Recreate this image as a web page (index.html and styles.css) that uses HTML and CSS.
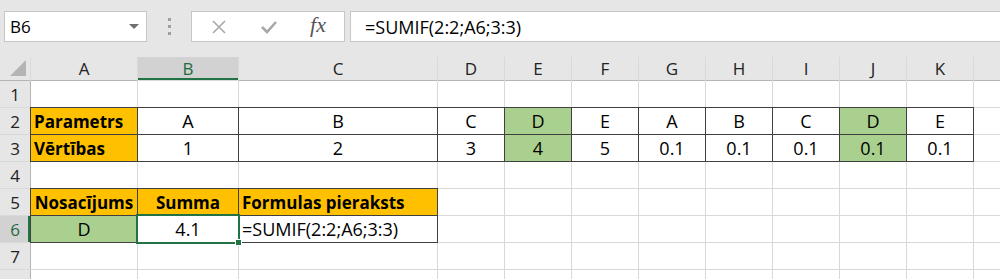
FILE: index.html
```html
<!DOCTYPE html>
<html lang="lv">
<head>
    <meta charset="UTF-8">
    <title>SUMIF</title>
    <link rel="stylesheet" href="styles.css">
</head>
<body>
    <div class="toolbar">
        <div class="namebox">
            <span>B6</span>
            <span class="arrow"></span>
        </div>
        <div class="dots"><i></i><i></i><i></i></div>
        <div class="fxbox">
            <svg width="16" height="16" viewBox="0 0 16 16"><path d="M2 2 L14 14 M14 2 L2 14" stroke="#a8a8a8" stroke-width="1.6" fill="none"/></svg>
            <svg width="18" height="16" viewBox="0 0 18 16"><path d="M2 8 L7 13 L16 3" stroke="#a8a8a8" stroke-width="2.6" fill="none"/></svg>
            <span class="fx">fx</span>
        </div>
        <div class="formula">=SUMIF(2:2;A6;3:3)</div>
    </div>

    <div class="sheet">
        <!-- headers -->
        <div class="corner"><span class="tri"></span></div>
        <div class="hdr">A</div>
        <div class="hdr active">B</div>
        <div class="hdr">C</div>
        <div class="hdr">D</div>
        <div class="hdr">E</div>
        <div class="hdr">F</div>
        <div class="hdr">G</div>
        <div class="hdr">H</div>
        <div class="hdr">I</div>
        <div class="hdr">J</div>
        <div class="hdr">K</div>
        <div class="hdr"></div>

        <!-- row 1 -->
        <div class="rh">1</div>
        <div class="cell"></div><div class="cell"></div><div class="cell"></div>
        <div class="cell"></div><div class="cell"></div><div class="cell"></div><div class="cell"></div>
        <div class="cell"></div><div class="cell"></div><div class="cell"></div><div class="cell"></div>
        <div class="cell"></div>

        <!-- row 2 -->
        <div class="rh">2</div>
        <div class="cell bd yellow bold left">Parametrs</div>
        <div class="cell bd">A</div>
        <div class="cell bd">B</div>
        <div class="cell bd">C</div>
        <div class="cell bd green">D</div>
        <div class="cell bd">E</div>
        <div class="cell bd">A</div>
        <div class="cell bd">B</div>
        <div class="cell bd">C</div>
        <div class="cell bd green">D</div>
        <div class="cell bd">E</div>
        <div class="cell"></div>

        <!-- row 3 -->
        <div class="rh">3</div>
        <div class="cell bd yellow bold left">Vērtības</div>
        <div class="cell bd">1</div>
        <div class="cell bd">2</div>
        <div class="cell bd">3</div>
        <div class="cell bd green">4</div>
        <div class="cell bd">5</div>
        <div class="cell bd">0.1</div>
        <div class="cell bd">0.1</div>
        <div class="cell bd">0.1</div>
        <div class="cell bd green">0.1</div>
        <div class="cell bd">0.1</div>
        <div class="cell"></div>

        <!-- row 4 -->
        <div class="rh">4</div>
        <div class="cell"></div><div class="cell"></div><div class="cell"></div>
        <div class="cell"></div><div class="cell"></div><div class="cell"></div><div class="cell"></div>
        <div class="cell"></div><div class="cell"></div><div class="cell"></div><div class="cell"></div>
        <div class="cell"></div>

        <!-- row 5 -->
        <div class="rh">5</div>
        <div class="cell bd yellow bold">Nosacījums</div>
        <div class="cell bd yellow bold">Summa</div>
        <div class="cell bd yellow bold left">Formulas pieraksts</div>
        <div class="cell"></div><div class="cell"></div><div class="cell"></div><div class="cell"></div>
        <div class="cell"></div><div class="cell"></div><div class="cell"></div><div class="cell"></div>
        <div class="cell"></div>

        <!-- row 6 -->
        <div class="rh active">6</div>
        <div class="cell bd green">D</div>
        <div class="cell bd sel">4.1<span class="handle"></span></div>
        <div class="cell bd left">=SUMIF(2:2;A6;3:3)</div>
        <div class="cell"></div><div class="cell"></div><div class="cell"></div><div class="cell"></div>
        <div class="cell"></div><div class="cell"></div><div class="cell"></div><div class="cell"></div>
        <div class="cell"></div>

        <!-- row 7 -->
        <div class="rh">7</div>
        <div class="cell"></div><div class="cell"></div><div class="cell"></div>
        <div class="cell"></div><div class="cell"></div><div class="cell"></div><div class="cell"></div>
        <div class="cell"></div><div class="cell"></div><div class="cell"></div><div class="cell"></div>
        <div class="cell"></div>

        <!-- row 8, only its top shows -->
        <div class="rh"></div>
        <div class="cell"></div><div class="cell"></div><div class="cell"></div>
        <div class="cell"></div><div class="cell"></div><div class="cell"></div><div class="cell"></div>
        <div class="cell"></div><div class="cell"></div><div class="cell"></div><div class="cell"></div>
        <div class="cell"></div>
    </div>
</body>
</html>
```

FILE: styles.css
```css
body {
    margin: 0;
    font-family: "Open Sans", Lato, sans-serif;
    font-size: 18px;
    color: #000;
    background: #e6e6e6;
    overflow: hidden;
}

/* === Formula bar === */
.toolbar {
    height: 57px;
    display: flex;
    align-items: flex-start;
    padding: 11px 0 0 4px;
    box-sizing: border-box;
    background: #e6e6e6;
}

.namebox {
    width: 143px;
    height: 31px;
    box-sizing: border-box;
    background: #fff;
    border: 1px solid #c6c6c6;
    display: flex;
    align-items: center;
    justify-content: space-between;
    padding: 0 7px 0 5px;
    font-size: 17px;
}

.arrow {
    width: 0;
    height: 0;
    border-left: 5px solid transparent;
    border-right: 5px solid transparent;
    border-top: 5px solid #6f6f6f;
}

.dots {
    width: 44px;
    height: 31px;
    display: flex;
    flex-direction: column;
    align-items: center;
    justify-content: center;
    gap: 4px;
}

.dots i {
    width: 3px;
    height: 3px;
    background: #a0a0a0;
}

.fxbox {
    width: 154px;
    height: 31px;
    box-sizing: border-box;
    background: #fff;
    border: 1px solid #c6c6c6;
    display: flex;
    align-items: center;
    padding: 0 18px 0 19px;
    justify-content: space-between;
}

.fx {
    font-family: "Liberation Serif", serif;
    font-style: italic;
    font-size: 22px;
    color: #555;
    margin-top: -3px;
}

.formula {
    flex: 1;
    margin-left: 5px;
    height: 31px;
    box-sizing: border-box;
    background: #fff;
    border: 1px solid #c6c6c6;
    border-right: none;
    padding: 0 0 0 14px;
    display: flex;
    align-items: center;
}

/* === Sheet grid === */
.sheet {
    display: grid;
    grid-template-columns: 30px 106px 100px 198px repeat(8, 66px) 1fr;
    grid-template-rows: 23px repeat(8, 26px);
    gap: 1px;
    background: #d9d9d9;
}

.corner,
.hdr,
.rh {
    background: #e6e6e6;
    display: flex;
    align-items: center;
    justify-content: center;
    color: #222;
    box-shadow: 0 1px 0 #b4b4b4;
    font-size: 17px;
}

.rh {
    box-shadow: 1px 0 0 #b4b4b4;
}

.corner {
    position: relative;
}

.tri {
    position: absolute;
    right: 4px;
    bottom: 4px;
    width: 0;
    height: 0;
    border-left: 16px solid transparent;
    border-bottom: 16px solid #b4b4b4;
}

.hdr.active {
    background: #d2d2d2;
    color: #1e6b41;
    box-shadow: inset 0 -2px 0 #217346;
}

.rh.active {
    background: #d2d2d2;
    color: #1e6b41;
    box-shadow: inset -2px 0 0 #217346;
}

.cell {
    background: #fff;
    display: flex;
    align-items: center;
    justify-content: center;
    white-space: nowrap;
}

.cell.left {
    justify-content: flex-start;
    padding-left: 3px;
}

.bd {
    box-shadow: 0 0 0 1px #404040;
}

.yellow {
    background: #ffc000;
}

.green {
    background: #a9d08e;
}

.bold {
    font-weight: bold;
    font-size: 17px;
}

.sel {
    position: relative;
    box-shadow: 0 0 0 2px #217346;
    z-index: 2;
}

.handle {
    position: absolute;
    right: -4px;
    bottom: -4px;
    width: 5px;
    height: 5px;
    background: #217346;
    border: 1px solid #fff;
}
```
